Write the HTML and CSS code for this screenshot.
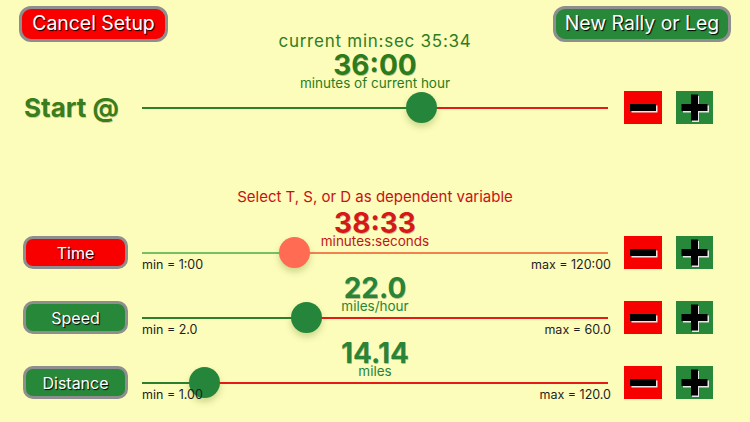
FILE: index.html
```html
<!DOCTYPE html>
<html lang="en">
<head>
<meta charset="utf-8">
<title>Rally Setup</title>
<link rel="stylesheet" href="styles.css">
</head>
<body>
<header class="top">
  <button class="pill pill-red cancel">Cancel Setup</button>
  <div class="start-readout">
    <div class="clock">current min:sec 35:34</div>
    <div class="value green-dark">36:00</div>
    <div class="unit green-dark">minutes of current hour</div>
  </div>
  <button class="pill pill-green newrally">New Rally or Leg</button>
</header>

<section class="line start-line">
  <div class="start-label">Start @</div>
  <div class="slot">
    <div class="slider">
      <span class="fill fill-green" style="width:279px"></span><span class="rest rest-red"></span>
      <span class="thumb thumb-green" style="left:263.5px"></span>
    </div>
  </div>
  <div class="steppers">
    <button class="step step-minus"><svg viewBox="0 0 38 33" width="38" height="33"><rect x="7.5" y="14.5" width="26" height="7" fill="#e6e6e6"/><rect x="6" y="13" width="26" height="7" fill="#000"/></svg></button>
    <button class="step step-plus"><svg viewBox="0 0 37 33" width="37" height="33"><rect x="7" y="14.5" width="26" height="7" fill="#e6e6e6"/><rect x="16" y="5" width="7" height="26" fill="#e6e6e6"/><rect x="5.5" y="13" width="26" height="7" fill="#000"/><rect x="15" y="3.5" width="7" height="26" fill="#000"/></svg></button>
  </div>
</section>

<p class="prompt">Select T, S, or D as dependent variable</p>

<section class="var">
  <div class="readout">
    <div class="value red">38:33</div>
    <div class="unit red-dark">minutes:seconds</div>
  </div>
  <div class="line">
    <button class="pill pill-red var-btn">Time</button>
    <div class="slot">
      <div class="slider">
        <span class="fill fill-light" style="width:152px"></span><span class="rest rest-coral"></span>
        <span class="thumb thumb-coral" style="left:136.5px"></span>
      </div>
      <div class="limits"><span>min = 1:00</span><span>max = 120:00</span></div>
    </div>
    <div class="steppers">
      <button class="step step-minus"><svg viewBox="0 0 38 33" width="38" height="33"><rect x="7.5" y="14.5" width="26" height="7" fill="#e6e6e6"/><rect x="6" y="13" width="26" height="7" fill="#000"/></svg></button>
      <button class="step step-plus"><svg viewBox="0 0 37 33" width="37" height="33"><rect x="7" y="14.5" width="26" height="7" fill="#e6e6e6"/><rect x="16" y="5" width="7" height="26" fill="#e6e6e6"/><rect x="5.5" y="13" width="26" height="7" fill="#000"/><rect x="15" y="3.5" width="7" height="26" fill="#000"/></svg></button>
    </div>
  </div>
</section>

<section class="var">
  <div class="readout">
    <div class="value green">22.0</div>
    <div class="unit green">miles/hour</div>
  </div>
  <div class="line">
    <button class="pill pill-green var-btn">Speed</button>
    <div class="slot">
      <div class="slider">
        <span class="fill fill-green" style="width:164px"></span><span class="rest rest-red"></span>
        <span class="thumb thumb-green" style="left:148.5px"></span>
      </div>
      <div class="limits"><span>min = 2.0</span><span>max = 60.0</span></div>
    </div>
    <div class="steppers">
      <button class="step step-minus"><svg viewBox="0 0 38 33" width="38" height="33"><rect x="7.5" y="14.5" width="26" height="7" fill="#e6e6e6"/><rect x="6" y="13" width="26" height="7" fill="#000"/></svg></button>
      <button class="step step-plus"><svg viewBox="0 0 37 33" width="37" height="33"><rect x="7" y="14.5" width="26" height="7" fill="#e6e6e6"/><rect x="16" y="5" width="7" height="26" fill="#e6e6e6"/><rect x="5.5" y="13" width="26" height="7" fill="#000"/><rect x="15" y="3.5" width="7" height="26" fill="#000"/></svg></button>
    </div>
  </div>
</section>

<section class="var">
  <div class="readout">
    <div class="value green">14.14</div>
    <div class="unit green">miles</div>
  </div>
  <div class="line">
    <button class="pill pill-green var-btn">Distance</button>
    <div class="slot">
      <div class="slider">
        <span class="fill fill-green" style="width:62.5px"></span><span class="rest rest-red"></span>
        <span class="thumb thumb-green" style="left:47px"></span>
      </div>
      <div class="limits"><span>min = 1.00</span><span>max = 120.0</span></div>
    </div>
    <div class="steppers">
      <button class="step step-minus"><svg viewBox="0 0 38 33" width="38" height="33"><rect x="7.5" y="14.5" width="26" height="7" fill="#e6e6e6"/><rect x="6" y="13" width="26" height="7" fill="#000"/></svg></button>
      <button class="step step-plus"><svg viewBox="0 0 37 33" width="37" height="33"><rect x="7" y="14.5" width="26" height="7" fill="#e6e6e6"/><rect x="16" y="5" width="7" height="26" fill="#e6e6e6"/><rect x="5.5" y="13" width="26" height="7" fill="#000"/><rect x="15" y="3.5" width="7" height="26" fill="#000"/></svg></button>
    </div>
  </div>
</section>
</body>
</html>
```

FILE: styles.css
```css
* { box-sizing: border-box; }

html, body {
  margin: 0;
  padding: 0;
  background: #fcfcbb;
  width: 750px;
  height: 422px;
  overflow: hidden;
  font-family: Inter, "Liberation Sans", sans-serif;
}

button {
  font-family: inherit;
  cursor: pointer;
  padding: 0;
}

/* header */
.top {
  display: grid;
  grid-template-columns: 1fr auto 1fr;
  align-items: start;
  padding: 0 19px;
}

.pill {
  border: 3px solid #8e8e8e;
  border-radius: 11px;
  color: #fff;
  text-shadow: 1px 1px 1px #000;
  line-height: 1;
}

.pill-red { background: #f80000; }
.pill-green { background: #28883a; }

.cancel {
  justify-self: start;
  margin-top: 6px;
  width: 149px;
  height: 36px;
  font-size: 19.4px;
  border-radius: 12px;
}

.newrally {
  justify-self: end;
  margin-top: 6px;
  width: 178px;
  height: 36px;
  font-size: 19.4px;
  border-radius: 12px;
}

.start-readout {
  margin-top: 31px;
  text-align: center;
}

.clock {
  font-size: 17px;
  line-height: 20px;
  letter-spacing: 0.75px;
  color: #2f7d1f;
}

.value {
  font-size: 28px;
  font-weight: 700;
  line-height: 23px;
  text-shadow: 0.5px 0.5px 0 rgba(0, 0, 0, 0.25);
}

.start-readout .value { margin-top: 3px; }

.unit {
  font-size: 13.5px;
  line-height: 13px;
}

.green-dark { color: #2d7c1c; }
.green { color: #2a8438; }
.red { color: #d81818; }
.red-dark { color: #c21616; }

/* rows */
.line {
  display: grid;
  grid-template-columns: 142px 466px auto;
  grid-template-rows: 33px;
  align-items: center;
  height: 33px;
}

.start-line { margin-top: 1px; }

.start-label {
  padding-left: 24px;
  font-size: 26px;
  font-weight: 700;
  color: #3a7d1c;
  text-shadow: 0.5px 0.5px 0 rgba(0, 0, 0, 0.2);
}

.slot {
  display: flex;
  flex-direction: column;
  height: 33px;
}

.slider {
  position: relative;
  display: flex;
  align-items: center;
  height: 33px;
  flex: none;
}

.fill, .rest {
  display: block;
  height: 2px;
}

.rest { flex: 1; }

.fill-green { background: #2b7f2e; }
.fill-light { background: #78c163; }
.rest-red { background: #e41b17; }
.rest-coral { background: #f2814f; }

.thumb {
  position: absolute;
  top: 1px;
  width: 31px;
  height: 31px;
  border-radius: 50%;
  box-shadow: 0 4px 6px rgba(70, 110, 0, 0.25);
}

.thumb-green { background: #25853a; }
.thumb-coral { background: #ff6b53; }

.limits {
  display: flex;
  justify-content: space-between;
  margin-top: -11px;
  margin-right: -3px;
  font-size: 12.5px;
  line-height: 14px;
  color: #1e1e1e;
  position: relative;
}

.steppers {
  display: flex;
  gap: 14px;
  margin-left: 16px;
}

.step {
  border: 0;
  height: 33px;
  display: block;
}

.step svg { display: block; }

.step-minus { width: 38px; background: #f70000; }
.step-plus { width: 37px; background: #28883a; }

/* dependent variable prompt */
.prompt {
  margin: 64px 0 0 142px;
  width: 466px;
  text-align: center;
  font-size: 15px;
  line-height: 18px;
  color: #c81212;
}

.var { margin-top: 8px; }
.prompt + .var { margin-top: 6px; }

.readout {
  margin-left: 142px;
  width: 466px;
  text-align: center;
}

.var .line { margin-top: -12px; }

.var-btn {
  margin-left: 23px;
  width: 105px;
  height: 33px;
  font-size: 16px;
  border-radius: 10px;
}
```
